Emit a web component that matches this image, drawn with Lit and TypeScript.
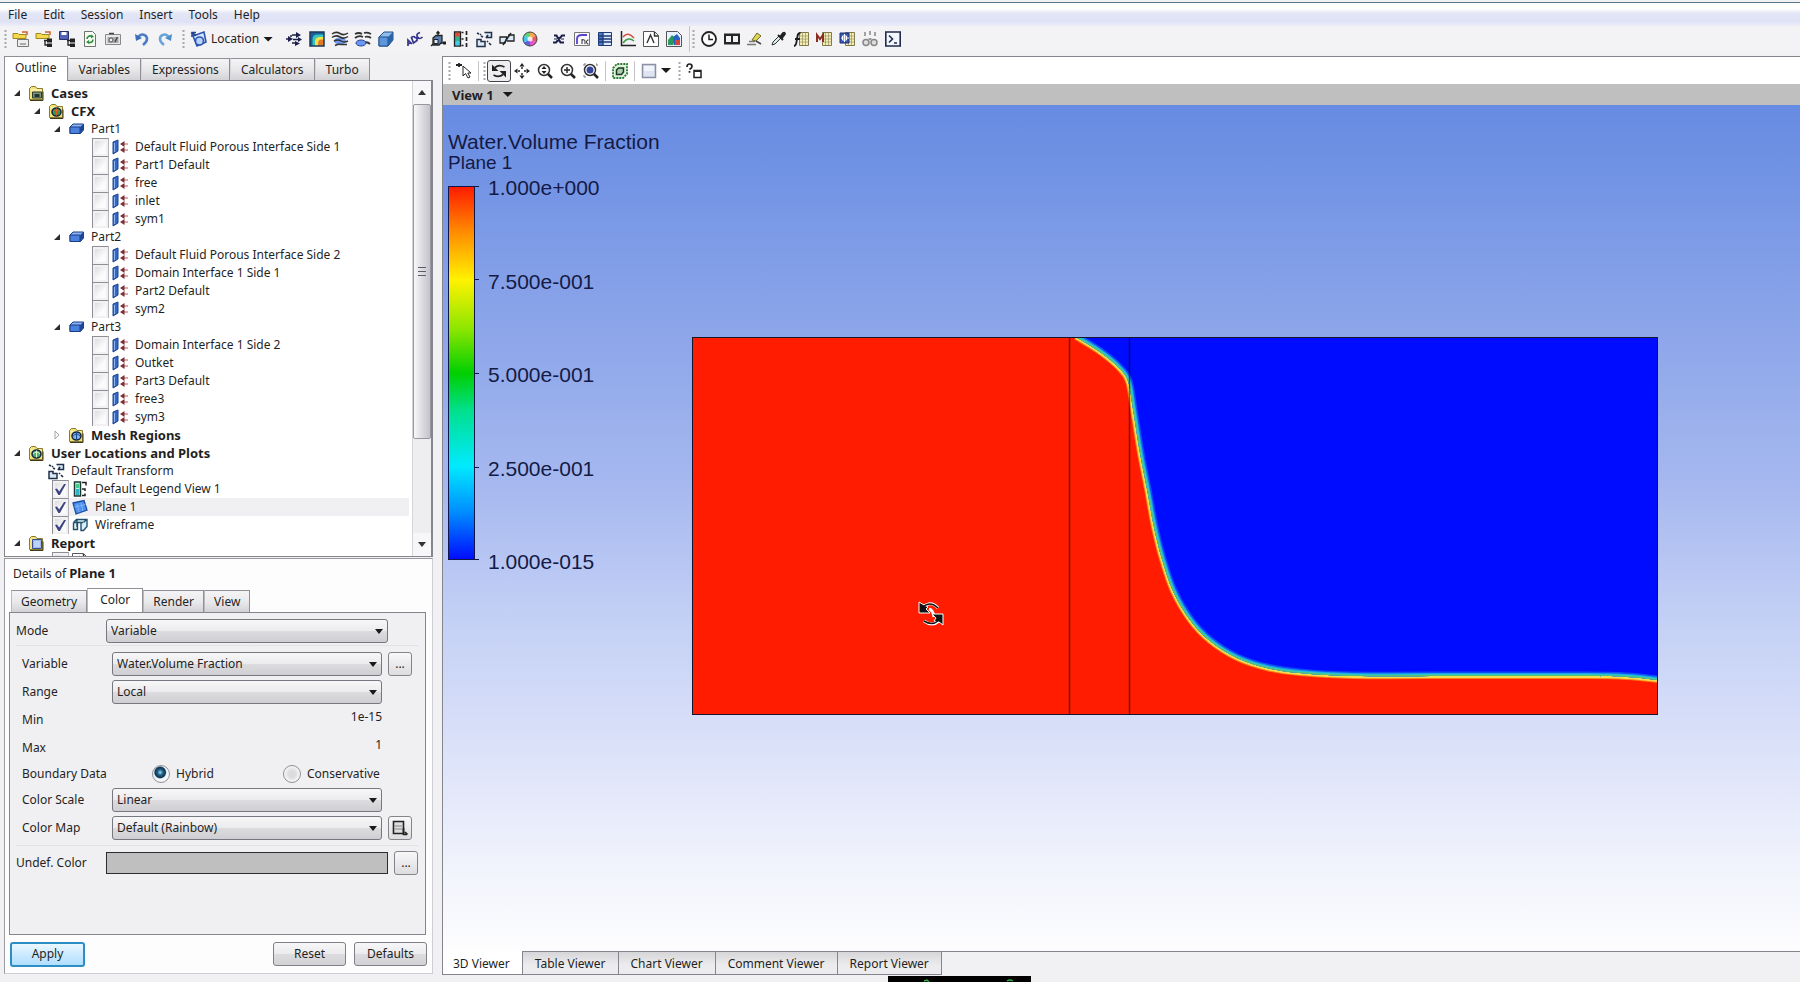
import { LitElement, html, svg, css, nothing, TemplateResult } from "lit";
import { customElement, property, state } from "lit/decorators.js";
import { classMap } from "lit/directives/class-map.js";

const ink = "#1b1f4a";

const folder = svg`<path d="M1.500 3.500l2-2h4l1.500 2h5.500v11h-13z" fill="#f3e37c" stroke="#8a7b2a"/><path d="M2.500 5h11" stroke="#fffbd0"/>`;
const globe = (a: string, b: string) => svg`<ellipse cx="8.500" cy="9" rx="4.500" ry="4" fill="${a}" stroke="#13253c" stroke-width="1.500"/><path d="M5 9q3.500-4 7 0M8.500 5.500v7" stroke="${b}" fill="none"/>`;
const lens = svg`<circle cx="7" cy="7" r="5.500" fill="#fff" stroke="#333" stroke-width="1.500"/><path d="M11 11l4 4" stroke="#222" stroke-width="2.500"/>`;
const sheet = svg`<path d="M6.500 1.500h9v13h-9z" fill="#f5efb8" stroke="#7d774c"/><path d="M6.500 5h9M6.500 8h9M6.500 11h9M9.500 2v12M12.500 2v12" stroke="#a39c68" stroke-width=".8"/>`;
const file = svg`<path d="M0 2.500h5l1 1h7v4h-13z" fill="#f5d94d" stroke="#a08820"/><path d="M9 1h5v3" fill="none" stroke="#d0602a" stroke-width="1.500"/>`;
const nodes = svg`<path d="M8 9.500h5M9 9v5h4" fill="none" stroke="#222" stroke-width="1.300"/><rect x="11" y="7.500" width="5" height="4" fill="#222"/><rect x="11" y="12.500" width="5" height="3.500" fill="#222"/>`;

const icons: Record<string, TemplateResult> = {
  load: svg`${file}<path d="M4.500 8.500h11v7h-11z" rx="1" fill="#eee" stroke="#777"/><path d="M7 12h6v2H7z" fill="#aaa"/>`,
  state: svg`${file}${nodes}`,
  save: svg`<path d="M.5.500h9v8h-9z" fill="#5364b8" stroke="#27306d"/><path d="M2.500 1h5v3h-5z" fill="#fff"/>${nodes}`,
  refresh: svg`<path d="M2.500.5h8l3 3v12h-11z" fill="#f6fbf4" stroke="#6b756c"/><path d="M5 8a3.200 3.200 0 0 1 5-2.500M11 8.500a3.200 3.200 0 0 1-5 2.500" fill="none" stroke="#2f8d3d" stroke-width="1.600"/><path d="M9 3.500l3 2-3 2zM7 13l-3-2 3-2z" fill="#2f8d3d"/>`,
  camera: svg`<path d="M.5 3.500h15v10h-15z" fill="#e8e8e8" stroke="#888"/><path d="M2.500 6h11v6h-11z" fill="#aaa"/><circle cx="6" cy="9" r="2" fill="#eee" stroke="#555"/><path d="M10 11l2.500-5M4 2.500h5" stroke="#444" stroke-width="1.400"/>`,
  undo: svg`<path d="M4 6.500c3-5 9-3 9 1.500 0 3-2 4.500-4 6" fill="none" stroke="#4b7cc4" stroke-width="2.600"/><path d="M1 3l1 7 6-3z" fill="#3c6db8"/>`,
  redo: svg`<path d="M12 6.500c-3-5-9-3-9 1.500 0 3 2 4.500 4 6" fill="none" stroke="#69a4d8" stroke-width="2.600"/><path d="M15 3l-1 7-6-3z" fill="#4a8fcb"/>`,
  location: svg`<path d="M2 5l11-4 2 10-9 4z" fill="#d6e6ff" stroke="#2a55b0" stroke-width="1.600"/><circle cx="8.500" cy="10" r="4" fill="#b9d2fb" stroke="#2a55b0" stroke-width="1.600"/><path d="M0 1.500l5 3M1 6V1.500h4" stroke="#23408c" fill="none" stroke-width="1.500"/>`,
  vector: svg`<path d="M0 8h4M6 4h5M7 8.500h5M6 12h4M5 4v2" stroke="${ink}" stroke-width="1.500"/><path d="M10 1l5 3-5 3zM12 6l4 2.500-4 2.500zM2 5l5 3-5 3zM9 10l5 2.500L9 15z" fill="${ink}"/>`,
  contour: svg`<path d="M1 1h14v14H1z" fill="#1c5f9e"/><path d="M3.500 15V8q0-4.500 5-4.500H15V15z" fill="#36c4c0"/><path d="M6 15v-4q0-5 5-5h4v9z" fill="#f2e24a"/><path d="M9 15v-3q0-3.500 3.500-3.500H15V15z" fill="#e27b28"/><path d="M1 1h14v14H1z" fill="none" stroke="#1b3a55" stroke-width="1.500"/>`,
  stream: svg`<ellipse cx="8" cy="10" rx="6" ry="3.500" fill="#6f9af2"/><path d="M0 3q4-3 8-.5t8-.5M0 6.500q4-3 8-.5t8-.5M2 10q4-2 7 0t7 0M3 14.500q4-2 6-1h6" fill="none" stroke="#333" stroke-width="1.500"/>`,
  particle: svg`<path d="M0 3q4-2 7 0m2-1q3-1 7 1M0 7q4-3 8-1m2 0q3-1 6 1M9 12q3-2 6 1" fill="none" stroke="#333" stroke-width="1.800"/><ellipse cx="6" cy="12" rx="5" ry="3" fill="#6b98f4" stroke="#27458d"/>`,
  volume: svg`<path d="M1 6l5-5h9v8l-5 6H1z" fill="#8fbdec" stroke="#214f87"/><path d="M1 6h9v9H1z" fill="#5d98dc" stroke="#214f87"/><path d="M10 6l5-5v8l-5 6z" fill="#2b62a8"/>`,
  text: svg`<path d="M1 15l0-6 4 4M1 13l3-1.500M6.500 12L4.500 6.500q3-2 3.500 0 2.500 0 2 3zM15.500 6q-3 3-5 0T13 1.500" fill="none" stroke="#34348c" stroke-width="1.700"/>`,
  frame: svg`<path d="M3 7l3-2.500h6V11l-3 3H3z" fill="#5b7fb5" stroke="#222" stroke-width="1.300"/><path d="M4 8.500h4v4H4z" fill="#e3ecf7" stroke="#222"/><path d="M8 5V1M6.500 2.500L8 .5l1.500 2M11 12h3M1 15l2-2" stroke="#222" stroke-width="1.300" fill="none"/><path d="M13 10.500h3v3h-3z" fill="#222"/>`,
  legend: svg`<path d="M1.500 1h6v14h-6z" fill="#31b38d" stroke="#222" stroke-width="1.300"/><path d="M2.500 1.500h4v4h-4z" fill="#e04a35"/><path d="M2.500 10h4v4.500h-4z" fill="#47c9e8"/><path d="M8.500 1.500h2M8.500 8h2M8.500 14.500h2M13.500 0v4M13.500 6v4M13.500 12v4" stroke="#222" stroke-width="1.700"/>`,
  legendTree: svg`<path d="M2.500 1h6v14h-6z" fill="#baf2df" stroke="#1c3a30" stroke-width="1.500"/><path d="M4 8h3v6H4z" fill="#2cb3c7"/><path d="M4 3h3v4H4z" fill="#41c98c"/><path d="M10 1.500h4v3M10 8h3v2M10 14.500h3v-2" stroke="#222" stroke-width="1.500" fill="none"/>`,
  transform: svg`<path d="M8.500 1.500h7v5h-5M1 8.500h4v2h4v5H1z" fill="#dce8f6" stroke="#20304a" stroke-width="1.500"/><path d="M1 2l2 1M5 5l2 1M4 3l1 1M11 10l1 1M13 12l2 2M12 4l-2 3" stroke="#20304a" stroke-width="1.700"/>`,
  clip: svg`<path d="M1 6h7l-2 6H1zM9 4h6v6H8" fill="#d9eaf8" stroke="#222" stroke-width="1.300"/><path d="M4 14l8-12" stroke="#222" stroke-width="1.500"/>`,
  wheel: svg`<path d="M8 8V1a7 7 0 0 1 6 3.500z" fill="#f7a84a"/><path d="M8 8l6-3.500a7 7 0 0 1 0 7z" fill="#ec5a5e"/><path d="M8 8l6 3.500A7 7 0 0 1 8 15z" fill="#e256c8"/><path d="M8 8v7a7 7 0 0 1-6-3.500z" fill="#5a62e8"/><path d="M8 8l-6 3.500a7 7 0 0 1 0-7z" fill="#46c3e8"/><path d="M8 8L2 4.500A7 7 0 0 1 8 1z" fill="#59d37b"/><circle cx="8" cy="8" r="7" fill="none" stroke="#444"/><circle cx="8" cy="8" r="2.500" fill="#fff" opacity=".8"/>`,
  variable: svg`<path d="M3 4.500h2.500l4 7H13M14 4.500h-3L5 11.500H2" fill="none" stroke="${ink}" stroke-width="2"/><path d="M3 8h3M10 8h3" stroke="${ink}"/>`,
  expression: svg`<path d="M.5 1.500h15v13H.5z" fill="#f8f8ff" stroke="#777"/><path d="M3 13V8q0-4 5-4h5" fill="none" stroke="#5a43c8" stroke-width="1.800"/><path d="M8 8v5m0-4q3-1 3 1v3M14.500 9q-2-.5-2 2t2 2" fill="none" stroke="#333"/>`,
  table: svg`<path d="M1.500 1.500h13v13h-13z" fill="#dce9fa" stroke="#1e3a78"/><path d="M2 2h4v12H2z" fill="#4d7dc8"/><path d="M2 5h12.500M2 8h12.500M2 11h12.500M6 2v12" stroke="#1e3a78" stroke-width="1.300"/>`,
  chart: svg`<path d="M1.500 0v14.500H16" fill="none" stroke="#222" stroke-width="1.500"/><path d="M3 6q5-6 11 1" fill="none" stroke="#d24c42" stroke-width="1.500"/><path d="M3 12q5-7 11-2" fill="none" stroke="#3e9c48" stroke-width="1.500"/>`,
  comment: svg`<path d="M.5.5h11l4 4v11H.5z" fill="#fff" stroke="#555"/><path d="M4 12l3.500-8L11 12M11.500 1v4h4" fill="none" stroke="#333" stroke-width="1.400"/>`,
  figure: svg`<path d="M.5.5h11l4 4v11H.5z" fill="#e8f2ff" stroke="#555"/><path d="M2 9l4-5 4 4-3 6H2z" fill="#2a9a5c"/><path d="M7 6l4-3 3 4v7H8z" fill="#2860c4"/><path d="M9 9h5v5H9z" fill="#d64538"/>`,
  clock: svg`<circle cx="8" cy="8" r="7" fill="#fff" stroke="#222" stroke-width="1.800"/><path d="M8 3.500V8.500h4" fill="none" stroke="#222" stroke-width="1.500"/>`,
  film: svg`<path d="M0 2.500h16v11H0z" fill="#262626"/><path d="M2 5h5v6H2zM9 5h5v6H9z" fill="#f2f2f2"/>`,
  edit: svg`<path d="M0 13.500h9M2 10.500h6" stroke="#777" stroke-width="1.500"/><path d="M5 9l5-7 4 3-5 5z" fill="#d8d455" stroke="#706a22"/><path d="M9 10l5 3" stroke="#444" stroke-width="1.500"/>`,
  probe: svg`<path d="M2 14l1-3 6-6 2 2-6 6z" fill="#dbe8ef" stroke="#333"/><path d="M8 4l5 5M10 6l3-4q2-1 2 1l-3 4" stroke="#222" fill="#222" stroke-width="1.800"/>`,
  fn: svg`${sheet}<path d="M1 15q2 0 2.500-4l1-6q.5-3 3-3M2 8h5" fill="none" stroke="#1c1c1c" stroke-width="1.800"/>`,
  macro: svg`${sheet}<path d="M1 11V4l3 4 3-4v7" fill="none" stroke="#8b2d22" stroke-width="2"/>`,
  calcMesh: svg`${sheet}<path d="M1 2h9v10H1z" fill="#3659b8" stroke="#1c2f70"/><path d="M3.500 5h4v4h-4zM5.500 3v8M2 7h8" fill="none" stroke="#fff"/>`,
  compare: svg`<circle cx="4" cy="11.500" r="3" fill="#ddd" stroke="#888" stroke-width="1.500"/><circle cx="12" cy="11.500" r="3" fill="#ddd" stroke="#888" stroke-width="1.500"/><path d="M3 1v4M8 0v4M13 1v4M6.500 8h3" stroke="#999" stroke-width="1.800"/>`,
  shell: svg`<path d="M.8 1h14.400v14H.8z" fill="#f4f7ff" stroke="#222c4a" stroke-width="1.600"/><path d="M4 4.500L7.500 8 4 11.500M9 12h3" fill="none" stroke="#222c4a" stroke-width="1.600"/>`,
  pick: svg`<path d="M0 2h6M3 0v4" stroke="#222" stroke-width="1.800"/><path d="M7 3v10l2.500-2.500L12 15l2-1-2.200-4H15z" fill="#fff" stroke="#222"/>`,
  rotate: svg`<path d="M1 1.500V8h6.500L5 5.500" fill="#222"/><path d="M4 4.500q4-3.500 9.500-.5" fill="none" stroke="#222" stroke-width="1.700"/><path d="M15 14.500V8H8.500L11 10.500" fill="#222"/><path d="M12 11.500q-4 3.500-9.500.5" fill="none" stroke="#222" stroke-width="1.700"/>`,
  pan: svg`<path d="M8 0l2.500 3.500h-5zM8 16l2.500-3.500h-5zM0 8l3.500-2.500v5zM16 8l-3.500-2.500v5z" fill="#222"/><path d="M8 4v2M8 10v2M4 8h2M10 8h2" stroke="#222" stroke-width="1.400"/>`,
  zoomDrag: svg`${lens}<path d="M7 3L9.500 6h-5zM7 11L9.500 8h-5z" fill="#222"/>`,
  zoomIn: svg`${lens}<path d="M4 7h6M7 4v6" stroke="#222" stroke-width="1.400"/>`,
  zoomFit: svg`${lens}<circle cx="7" cy="7" r="3.500" fill="#35459a"/><path d="M1 3V1h2M13 1h1v2M1 12v2h2" fill="none" stroke="#777"/>`,
  highlight: svg`<path d="M1 5l4-4h10v10l-4 4H1z" fill="#dff3dd" stroke="#2b7a34" stroke-width="1.800" stroke-dasharray="2 1"/><path d="M4.500 7l2-2h5v4l-2 2.500h-5z" fill="#a9cfac" stroke="#1d3b20" stroke-width="1.500"/>`,
  square: svg`<path d="M1.500 1.500h13v13h-13z" fill="#dfe4f3" stroke="#8c90a2" stroke-width="1.500"/><path d="M3 3h10v5H3z" fill="#f2f4fb"/>`,
  help: svg`<path d="M1 4q0-3 2.500-3T6 3.500Q6 5 3.500 6.500M3.500 8v1.800" fill="none" stroke="#222" stroke-width="1.700"/><path d="M8 7.500h7v7H8z" fill="#fff" stroke="#222" stroke-width="1.500"/><path d="M8 8h7" stroke="#222" stroke-width="2"/>`,
  folderCase: svg`${folder}<path d="M4.500 7h9v6h-9z" fill="#7c9480" stroke="#2d3830"/><path d="M6.500 9h5v3h-5z" fill="#22352b"/><path d="M2 15.500h13v-9" stroke="#3e3a20" fill="none"/>`,
  folderCfx: svg`${folder}${globe("#2f9a4c", "#e05a2a")}<path d="M2 15.500h13v-9" stroke="#3e3a20" fill="none"/>`,
  folderMesh: svg`${folder}${globe("#7fb0ea", "#1d4b96")}<path d="M2 15.500h13v-9" stroke="#3e3a20" fill="none"/>`,
  folderPlots: svg`${folder}${globe("#46b184", "#e8f4c0")}<path d="M2 15.500h13v-9" stroke="#3e3a20" fill="none"/>`,
  folderReport: svg`${folder}<path d="M4.500 4.500h9v9h-9z" fill="#9bb8f0" stroke="#3a4c8c"/><path d="M6 7h6M6 9h6M6 11h6" stroke="#dfe9ff"/><path d="M2 15.500h13v-9" stroke="#3e3a20" fill="none"/>`,
  domain: svg`<path d="M2 6l3-3h10.500v6l-3 3.500H2z" fill="#8db4f4" stroke="#1a3c86"/><path d="M2 6h10v6.500H2z" fill="#4a80de" stroke="#1a3c86"/><path d="M12 6l3.500-3v6l-3.500 3.500z" fill="#1f4696"/>`,
  boundary: svg`<path d="M1 3l5-2v11l-5 3z" fill="#3468c6" stroke="#1f4490"/><path d="M2.500 4v9" stroke="#8fb6f2"/><path d="M11 5h5M11 11h5" stroke="#d09090" stroke-width="1.600"/><path d="M8 5l4.500-3v6zM8 11l4.500-3v6z" fill="#7c2f38"/>`,
  plane: svg`<path d="M1 4l11-2.500L15 11 4 15z" fill="#4d90ee" stroke="#1c4fa6" stroke-width="1.300"/><path d="M5 5l2 8M9 4l2 8M2.500 8l11-2.500" stroke="#8cbcfb" stroke-width=".8"/>`,
  wire: svg`<path d="M1.500 5.500l3-3h10.500v7l-3.500 4h-2.500V5.500M1.500 5.500H11M1.500 5.500v7h4v-7M11.500 5.500l3-3M5 10V2.500" fill="#d8f0f8" stroke="#24506e" stroke-width="1.400"/>`,
  colormap: svg`<path d="M1.500 1.500h10v12h-10z" fill="#ddd" stroke="#222" stroke-width="1.600"/><path d="M3 6h7M3 9h7" stroke="#888"/><path d="M11.500 8v6.500H15M13 12l2.500 2.500" fill="none" stroke="#222" stroke-width="1.700"/>`,
};

@customElement("ui-icon")
export class UiIcon extends LitElement {
  @property() name = "";
  static styles = css`
    :host { display: block; flex: none; width: 16px; height: 16px; }
    svg { display: block; width: 16px; height: 16px; overflow: visible; }
  `;
  render() {
    return html`<svg viewBox="0 0 16 16" aria-hidden="true">${icons[this.name]}</svg>`;
  }
}

interface TreeItem {
  label: string;
  icon: string;
  level: number;
  open?: boolean;
  bold?: boolean;
  check?: boolean;
  selected?: boolean;
}

const branch = (label: string, icon: string, level: number, bold = true, open = true): TreeItem => ({ label, icon, level, bold, open });
const leaf = (label: string): TreeItem => ({ label, icon: "boundary", level: 3, check: false });

const treeItems: TreeItem[] = [
  branch("Cases", "folderCase", 0),
  branch("CFX", "folderCfx", 1),
  branch("Part1", "domain", 2, false),
  ...["Default Fluid Porous Interface Side 1", "Part1 Default", "free", "inlet", "sym1"].map(leaf),
  branch("Part2", "domain", 2, false),
  ...["Default Fluid Porous Interface Side 2", "Domain Interface 1 Side 1", "Part2 Default", "sym2"].map(leaf),
  branch("Part3", "domain", 2, false),
  ...["Domain Interface 1 Side 2", "Outket", "Part3 Default", "free3", "sym3"].map(leaf),
  branch("Mesh Regions", "folderMesh", 2, true, false),
  branch("User Locations and Plots", "folderPlots", 0),
  { label: "Default Transform", icon: "transform", level: 1 },
  { label: "Default Legend View 1", icon: "legendTree", level: 1, check: true },
  { label: "Plane 1", icon: "plane", level: 1, check: true, selected: true },
  { label: "Wireframe", icon: "wire", level: 1, check: true },
  branch("Report", "folderReport", 0),
  { label: "", icon: "comment", level: 1, check: true },
];

@customElement("outline-tree")
export class OutlineTree extends LitElement {
  static styles = css`
    :host { display: flex; flex: 1; min-height: 0; border: 1px solid #85858d; border-right-width: 2px; background: #fff; overflow: hidden; }
    .rows { flex: 1; min-width: 0; padding: 3px 3px 0 5px; overflow: hidden; }
    .row { display: flex; align-items: center; height: 18px; line-height: 18px; white-space: nowrap; }
    .row > label, .row > .name { margin-left: 7px; }
    .bold { font-weight: 700; font-size: 13px; }
    .indent1 { padding-left: 20px; }
    .indent2 { padding-left: 40px; }
    .tick1 { padding-left: 42px; }
    .tick3 { padding-left: 82px; }
    .selected { background: linear-gradient(90deg, transparent 40px, #f0eff2 40px); }
    .twisty { width: 14px; height: 18px; margin-right: 4px; padding: 0; border: 0; background: none; display: grid; place-items: center; }
    .twisty svg { width: 8px; height: 8px; }
    .spacer { width: 18px; }
    input { appearance: none; flex: none; width: 17px; height: 18px; margin: 0 3px 0 0; border: 1px solid #8e8e94; border-right-color: #b4b4ba; border-bottom: 0; background: linear-gradient(135deg, #d4d4d8, #fbfbfb 60%); box-shadow: inset 0 0 0 2px #f1f1f3; display: grid; place-items: center; }
    input:checked::after { content: ""; width: 11px; height: 11px; background: #3c4580; clip-path: polygon(0 45%, 18% 40%, 38% 68%, 82% 0, 100% 0, 45% 100%, 30% 100%); }
    .bar { flex: none; width: 18px; display: flex; flex-direction: column; align-items: stretch; background: #eeedf0; border-left: 1px solid #d5d4d8; }
    .bar button { height: 23px; padding: 0; border: 0; background: #f7f7f9; display: grid; place-items: center; }
    .bar svg { width: 8px; height: 5px; }
    .track { flex: 1; }
    .thumb { height: 78%; box-sizing: border-box; border: 1px solid #98979f; border-radius: 2px; background: linear-gradient(90deg, #f8f8fa, #dddce2 50%, #c4c3cc); display: flex; flex-direction: column; gap: 3px; align-items: center; justify-content: center; }
    .thumb i { width: 8px; height: 1px; background: #5c5c66; }
  `;

  private renderRow(item: TreeItem) {
    const ticked = item.check !== undefined;
    const id = "item-" + item.label.toLowerCase().replace(/\s+/g, "-");
    const classes = {
      row: true,
      bold: !!item.bold,
      selected: !!item.selected,
      [ticked ? `tick${item.level}` : `indent${item.level}`]: true,
    };
    return html`<div class=${classMap(classes)}>
      ${ticked
        ? html`<input type="checkbox" id=${id} aria-label=${item.label ? nothing : "Report item"} ?checked=${item.check} />`
        : item.open === undefined
          ? html`<span class="spacer"></span>`
          : html`<button class="twisty" aria-label="Toggle ${item.label}">
              <svg viewBox="0 0 8 8">
                ${item.open
                  ? svg`<path d="M7 1v6H1z" fill="#2b2b2b"/>`
                  : svg`<path d="M2 0l4 4-4 4z" fill="#fff" stroke="#a5a5a5"/>`}
              </svg>
            </button>`}
      <ui-icon name=${item.icon}></ui-icon>
      ${ticked ? html`<label for=${id}>${item.label}</label>` : html`<span class="name">${item.label}</span>`}
    </div>`;
  }

  render() {
    return html`
      <div class="rows">${treeItems.map((item) => this.renderRow(item))}</div>
      <div class="bar">
        <button aria-label="Scroll up"><svg viewBox="0 0 8 5"><path d="M0 5l4-5 4 5z" fill="#333" /></svg></button>
        <div class="track"><div class="thumb"><i></i><i></i><i></i></div></div>
        <button aria-label="Scroll down"><svg viewBox="0 0 8 5"><path d="M0 0h8L4 5z" fill="#333" /></svg></button>
      </div>
    `;
  }
}

@customElement("details-panel")
export class DetailsPanel extends LitElement {
  @state() private tab = "Color";
  static styles = css`
    :host { display: flex; flex-direction: column; border: 1px solid #9b9ba1; border-right-color: #cfced4; border-bottom-color: #cfced4; background: #fdfdfe; }
    button, select { font: inherit; color: inherit; }
    .title { height: 29px; line-height: 29px; padding-left: 8px; }
    .title b { font-size: 13px; }
    .tabs { display: flex; align-items: flex-end; height: 24px; padding-left: 6px; }
    .tabs button { height: 22px; padding: 0 9px; border: 1px solid #8f8f96; border-bottom: 0; border-left-color: #b9b9be; background: linear-gradient(#f4f4f6, #eaeaec 50%, #d3d3d7); }
    .tabs button.on { height: 25px; margin-bottom: -1px; padding: 0 12px 2px; background: #fff; }
    .form { display: flex; flex-direction: column; min-height: 323px; box-sizing: border-box; margin: 0 6px 0 4px; padding: 6px 7px 0 6px; border: 1px solid #85858c; background: #f0eff1; }
    .row { display: flex; align-items: center; height: 24px; }
    .row > label:first-child, .row > .caption { flex: none; width: 90px; }
    .group { display: flex; flex-direction: column; gap: 4px; margin: 2px 0 5px; padding: 6px 0 5px 6px; border: solid #e2e1e5; border-width: 1px 0; }
    .radios { height: 20px; }
    .pick { flex: none; display: grid; align-items: center; width: 270px; }
    .wide { width: 282px; }
    .pick > * { grid-area: 1 / 1; }
    .pick svg { justify-self: end; width: 8px; height: 5px; margin-right: 5px; pointer-events: none; }
    select { appearance: none; width: 100%; height: 24px; padding: 0 18px 0 4px; border: 1px solid #77777f; border-radius: 3px; background: linear-gradient(#f7f7f8, #ebebed 50%, #dcdcdf 52%, #cfcfd3); }
    .small { flex: none; width: 24px; height: 24px; margin-left: 6px; padding: 0; border: 1px solid #84848b; border-radius: 3px; background: linear-gradient(#f8f8f9, #dddde0); display: grid; place-items: center; }
    output { width: 270px; height: 24px; line-height: 18px; text-align: right; }
    .radio { flex: none; display: flex; align-items: center; gap: 6px; margin-left: 40px; width: 91px; white-space: nowrap; }
    .radio input { appearance: none; flex: none; width: 18px; height: 18px; margin: 0; border: 1px solid #8f9096; border-radius: 50%; background: radial-gradient(#dcdcde 30%, #fafafa 75%); }
    .radio input:checked { background: radial-gradient(circle at 45% 40%, #9bd8f0 0, #1c5d86 22%, #0f3452 40%, #f4f7f9 50%); }
    .swatch { flex: none; width: 282px; height: 22px; padding: 0; border: 1px solid #2c2c2e; background: #c0bfc0; }
    .actions { display: flex; align-items: center; gap: 8px; height: 38px; padding: 0 5px; }
    .actions button { width: 73px; height: 24px; padding: 0; border: 1px solid #7f7f86; border-radius: 3px; background: linear-gradient(#f7f7f8, #ebebed 50%, #dcdcdf 52%, #d2d2d6); }
    .actions .apply { width: 75px; height: 25px; margin-right: auto; border: 2px solid #2c8fc4; background: linear-gradient(#eaf8ff, #cbeaff 50%, #b0deff); }
  `;

  private pick(id: string, value: string, wide = false) {
    return html`<span class=${classMap({ pick: true, wide })}>
      <select id=${id}><option>${value}</option></select>
      <svg viewBox="0 0 8 5"><path d="M0 0h8L4 5z" fill="#1a1a1a" /></svg>
    </span>`;
  }

  render() {
    return html`
      <div class="title">Details of <b>Plane 1</b></div>
      <div class="tabs" role="tablist">
        ${["Geometry", "Color", "Render", "View"].map(
          (t) => html`<button role="tab" class=${classMap({ on: t === this.tab })} @click=${() => (this.tab = t)}>${t}</button>`
        )}
      </div>
      <div class="form">
        <div class="row"><label for="mode">Mode</label>${this.pick("mode", "Variable", true)}</div>
        <div class="group">
          <div class="row">
            <label for="variable">Variable</label>${this.pick("variable", "Water.Volume Fraction")}
            <button class="small" aria-label="More variables">...</button>
          </div>
          <div class="row"><label for="range">Range</label>${this.pick("range", "Local")}</div>
          <div class="row"><label for="min">Min</label><output id="min">1e-15</output></div>
          <div class="row"><label for="max">Max</label><output id="max">1</output></div>
          <div class="row radios">
            <span class="caption">Boundary Data</span>
            <label class="radio"><input type="radio" name="boundary" checked />Hybrid</label>
            <label class="radio"><input type="radio" name="boundary" />Conservative</label>
          </div>
          <div class="row"><label for="scale">Color Scale</label>${this.pick("scale", "Linear")}</div>
          <div class="row">
            <label for="map">Color Map</label>${this.pick("map", "Default (Rainbow)")}
            <button class="small" aria-label="Edit color map"><ui-icon name="colormap"></ui-icon></button>
          </div>
        </div>
        <div class="row">
          <label for="undef">Undef. Color</label>
          <button class="swatch" id="undef"></button>
          <button class="small" aria-label="Choose color">...</button>
        </div>
      </div>
      <div class="actions">
        <button class="apply">Apply</button><button>Reset</button><button>Defaults</button>
      </div>
    `;
  }
}

const interfaceLine: [number, number][] = [
  [384, 0], [408, 15], [426, 30], [436, 44], [441, 72], [448, 116], [455, 152], [462, 190], [470, 222], [481, 254],
  [498, 283], [518, 304], [545, 321], [575, 331], [608, 336], [661, 339], [780, 339], [895, 339], [935, 340], [966, 343],
];

/** Catmull-Rom spline through the points, written as cubic segments. */
function spline(p: [number, number][]): string {
  let d = `M${p[0][0]} ${p[0][1]}`;
  for (let i = 0; i < p.length - 1; i++) {
    const a = p[i - 1] ?? p[i], b = p[i], c = p[i + 1], e = p[i + 2] ?? c;
    d += `C${b[0] + (c[0] - a[0]) / 6} ${b[1] + (c[1] - a[1]) / 6} ${c[0] - (e[0] - b[0]) / 6} ${c[1] - (e[1] - b[1]) / 6} ${c[0]} ${c[1]}`;
  }
  return d;
}

@customElement("result-view")
export class ResultView extends LitElement {
  static styles = css`
    :host { display: grid; grid-template-columns: 249px minmax(0, 1fr) 142px; align-items: start; min-height: 0; overflow: hidden; color: #141a45; font-family: "Liberation Sans", Arial, sans-serif;
      background: linear-gradient(#668be2, #8aa4e9 25%, #a6b8ef 45%, #c2cff5 60%, #d8dff8 74%, #f1f3fc 90%, #fdfdfe); }
    .legend { padding: 25px 0 0 5px; white-space: nowrap; }
    .name { font-size: 21px; line-height: 24px; }
    .place { font-size: 19px; line-height: 18px; }
    .scale { display: flex; gap: 12px; margin-top: 4px; }
    .scale svg { width: 32px; height: 396px; flex: none; }
    .marks { display: flex; flex-direction: column; justify-content: space-between; height: 396px; margin: 1px 0 0 -4px; font-size: 21px; line-height: 22px; }
    .plot { display: block; width: 100%; margin-top: 232px; overflow: visible; }
  `;
  render() {
    const line = spline(interfaceLine);
    const band = (color: string, width: number) => svg`<path d=${line} fill="none" stroke=${color} stroke-width=${width} />`;
    const ramp: [number, string][] = [
      [0, "#ff1a00"], [12, "#ff8a00"], [25, "#fff200"], [38, "#8fe600"], [50, "#00cf00"], [60, "#00e08c"], [75, "#00eaff"], [87, "#0090ff"], [100, "#000cff"],
    ];
    return html`
      <div class="legend">
        <div class="name">Water.Volume Fraction</div>
        <div class="place">Plane 1</div>
        <div class="scale">
          <svg viewBox="0 0 32 396">
            <defs><linearGradient id="ramp" x2="0" y2="1">${ramp.map(([o, c]) => svg`<stop offset="${o}%" stop-color=${c} />`)}</linearGradient></defs>
            <rect x=".5" y="10.500" width="26" height="373" fill="url(#ramp)" stroke="#10164a" />
            <path d="M27 10.500h4M27 103.500h4M27 197.500h4M27 291.500h4M27 383.500h4" stroke="#10164a" />
          </svg>
          <div class="marks">
            <span>1.000e+000</span><span>7.500e-001</span><span>5.000e-001</span><span>2.500e-001</span><span>1.000e-015</span>
          </div>
        </div>
      </div>
      <svg class="plot" viewBox="0 0 966 378" role="img" aria-label="Water volume fraction on Plane 1">
        <defs>
          <clipPath id="frame"><rect width="966" height="378" /></clipPath>
          <clipPath id="air"><path d="${line}V0Z" /></clipPath>
        </defs>
        <rect width="966" height="378" fill="#ff1c00" />
        <g clip-path="url(#frame)">
          ${band("#ff7a10", 6)}${band("#f2dc50", 4)}
          <g clip-path="url(#air)">
            <rect width="966" height="378" fill="#000cff" />
            ${band("#0a4cf5", 9)}${band("#1aa0ee", 6)}${band("#33c8c4", 4)}${band("#58c070", 2)}
          </g>
        </g>
        <path d="M377.500 0v378M437.500 0v378" stroke="#000" stroke-opacity=".5" stroke-width="1.500" />
        <rect x=".5" y=".5" width="965" height="377" fill="none" stroke="#15152c" />
        <g transform="translate(226 264)">
          <path d="M5 6Q13-1 20 7M6 20q8 6 15 0M11 8q4 1 5 8" fill="none" stroke="#fff" stroke-width="3" />
          <path d="M1 1v11h11L8 8l2-2-4-2zM25 24V13H14l4 4-2 3 5 1z" fill="#111" stroke="#fff" />
          <path d="M6 5Q13 0 20 7M6 20q8 5 14 0" fill="none" stroke="#111" stroke-width="1.500" />
        </g>
      </svg>
    `;
  }
}

const mainTools: string[][] = [
  ["load", "state", "save", "refresh", "camera"],
  ["undo", "redo"],
];
const plotTools: string[][] = [
  ["vector", "contour", "stream", "particle", "volume"],
  ["text", "frame", "legend", "transform", "clip", "wheel"],
  ["variable", "expression", "table", "chart", "comment", "figure"],
];
const extraTools = ["clock", "film", "edit", "probe", "fn", "macro", "calcMesh", "compare", "shell"];

@customElement("app-root")
export class AppRoot extends LitElement {
  static styles = css`
    :host { display: flex; flex-direction: column; box-sizing: border-box; height: 100vh; padding-bottom: 8px; overflow: hidden; position: relative; background: #f1f0f3; color: #1f1f24; font: 12px/16px "Noto Sans", sans-serif; }
    button { font: inherit; color: inherit; }
    .menu { display: flex; flex: none; height: 23px; padding-left: 8px; gap: 16px; border-top: 1px solid #55788e; margin-top: 2px; background: linear-gradient(#fff 25%, #e3e6f6 45%, #dfe2f4 80%, #ecedf8); }
    .menu button { padding: 0; border: 0; background: none; line-height: 23px; }
    .tools { display: flex; flex: none; align-items: center; height: 26px; gap: 13px; padding-left: 8px; margin-bottom: 4px; background: #f3f2f5; }
    .set { display: flex; align-items: center; gap: 7px; }
    .icon { width: 16px; height: 16px; padding: 0; border: 0; background: none; }
    .grip { width: 3px; height: 20px; margin: 0 -7px 0 -4px; background: radial-gradient(circle, #aaa 40%, transparent 50%) 0 0 / 3px 4px; }
    .rule { width: 1px; height: 26px; background: #c4c4c8; margin: 0 -7px 0 -6px; }
    .location { display: flex; align-items: center; gap: 4px; padding: 0; border: 0; background: none; }
    .arrow { width: 10px; height: 5px; background: #1a1a1a; clip-path: polygon(0 0, 100% 0, 50% 100%); }
    main { flex: 1; min-height: 0; display: grid; grid-template-columns: 429px minmax(0, 1fr); gap: 9px; padding-left: 4px; }
    aside { display: flex; flex-direction: column; min-height: 0; }
    .tabs { display: flex; align-items: flex-end; height: 24px; }
    .tabs button { height: 22px; padding: 0 10px; border: 1px solid #8f8f96; border-width: 1px 1px 0 1px; border-left-color: #d6d6da; background: linear-gradient(#f4f4f6, #e8e8ea 50%, #d3d3d7); }
    .tabs button.on { height: 25px; margin-bottom: -1px; padding: 0 10px 2px; border-left-color: #8f8f96; background: #fff; position: relative; }
    details-panel { margin-top: 1px; }
    .viewer { display: flex; flex-direction: column; min-width: 0; min-height: 0; margin-bottom: -1px; }
    .stage { flex: 1; min-height: 0; display: flex; flex-direction: column; border: solid #85858d; border-width: 1px 0 1px 1px; }
    .viewtools { display: flex; flex: none; align-items: center; gap: 7px; height: 27px; padding-left: 7px; background: #fff; }
    .viewtools .grip { margin: 0 -2px; }
    .viewtools .arrow { margin: 0 2px 0 -3px; }
    .viewtools .rule { margin: 0 -1px; height: 20px; }
    .viewtools .active { width: 24px; height: 22px; margin: 0 -4px; border: 1px solid #44444a; border-radius: 3px; background: #ededf0; display: grid; place-items: center; }
    .viewbar { display: flex; flex: none; align-items: center; gap: 9px; height: 21px; padding: 0 0 0 9px; border: 0; background: #c0bfc0; font-weight: 700; font-size: 13px; }
    result-view { flex: 1; }
    .bottom { display: flex; flex: none; height: 23px; align-items: flex-start; }
    .bottom button { height: 23px; padding: 2px 12px 0; border: 1px solid #85858d; border-top: 0; border-left: 0; background: linear-gradient(#d6d6da, #ececee 60%); }
    .bottom button.on { height: 24px; margin-top: -1px; padding: 2px 12px 0 10px; border-left: 1px solid #85858d; background: #fff; }
    .badge { position: absolute; bottom: 0; left: 888px; width: 143px; height: 6px; background: #000; }
    .badge svg { display: block; width: 100%; height: 6px; }
  `;

  private tools(names: string[]) {
    return html`<div class="set">
      ${names.map((n) => html`<button class="icon" aria-label=${n}><ui-icon name=${n}></ui-icon></button>`)}
    </div>`;
  }

  private tabs(names: string[], active: string) {
    return names.map((n) => html`<button role="tab" class=${n === active ? "on" : nothing}>${n}</button>`);
  }

  render() {
    return html`
      <nav class="menu">${["File", "Edit", "Session", "Insert", "Tools", "Help"].map((m) => html`<button>${m}</button>`)}</nav>
      <div class="tools">
        <span class="grip"></span>
        ${mainTools.map((g) => this.tools(g))}
        <span class="grip"></span>
        <button class="location"><ui-icon name="location"></ui-icon>Location<span class="arrow"></span></button>
        ${plotTools.map((g) => this.tools(g))}
        <span class="rule"></span>
        <span class="grip"></span>
        ${this.tools(extraTools)}
      </div>
      <main>
        <aside>
          <div class="tabs" role="tablist">${this.tabs(["Outline", "Variables", "Expressions", "Calculators", "Turbo"], "Outline")}</div>
          <outline-tree></outline-tree>
          <details-panel></details-panel>
        </aside>
        <section class="viewer">
          <div class="stage">
            <div class="viewtools">
              <span class="grip"></span>
              ${this.tools(["pick"])}
              <span class="rule"></span>
              <span class="grip"></span>
              <button class="icon active" aria-label="rotate"><ui-icon name="rotate"></ui-icon></button>
              ${this.tools(["pan", "zoomDrag", "zoomIn", "zoomFit"])}
              <span class="rule"></span>
              ${this.tools(["highlight"])}
              <span class="rule"></span>
              ${this.tools(["square"])}
              <span class="arrow"></span>
              <span class="grip"></span>
              ${this.tools(["help"])}
            </div>
            <button class="viewbar">View 1<span class="arrow"></span></button>
            <result-view></result-view>
          </div>
          <div class="bottom" role="tablist">
            ${this.tabs(["3D Viewer", "Table Viewer", "Chart Viewer", "Comment Viewer", "Report Viewer"], "3D Viewer")}
          </div>
        </section>
      </main>
      <div class="badge">
        <svg viewBox="0 0 143 6" preserveAspectRatio="none"><path d="M36 5l3-1 2 2M119 5q3-2 6 0" stroke="#2fae3e" stroke-width="1.500" fill="none" /></svg>
      </div>
    `;
  }
}
